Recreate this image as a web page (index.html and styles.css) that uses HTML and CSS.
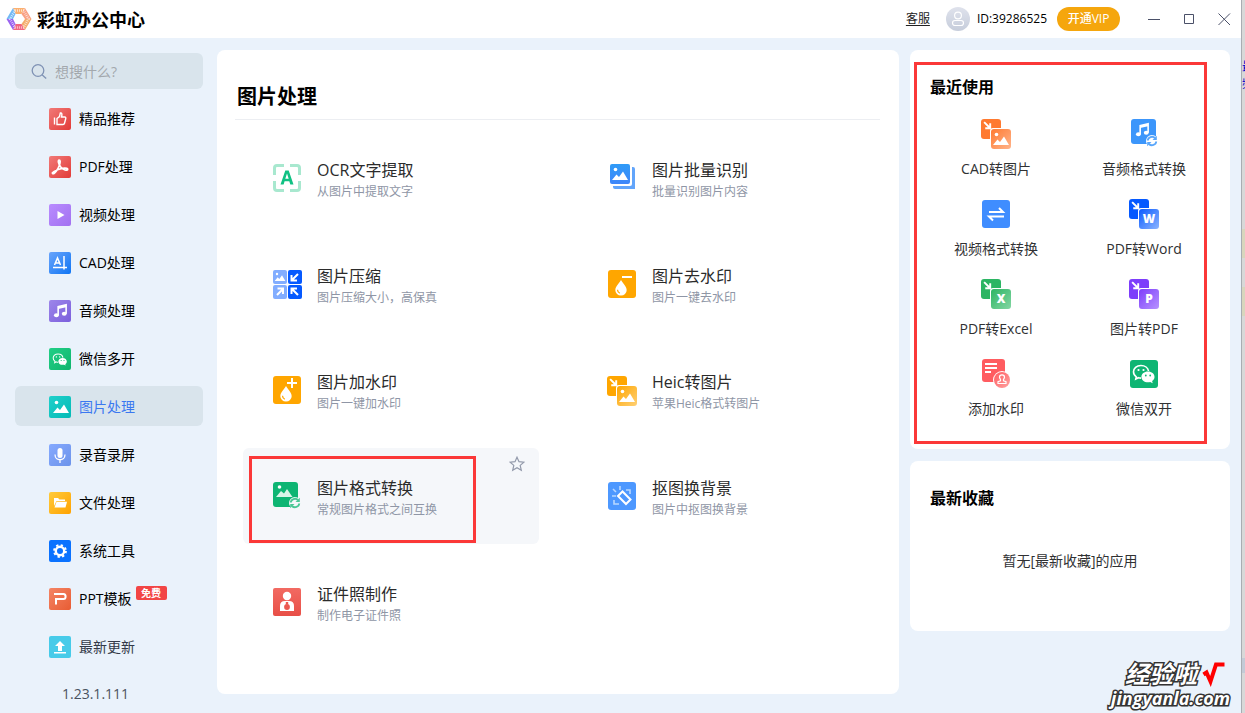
FILE: index.html
```html
<!DOCTYPE html>
<html lang="zh-CN">
<head>
<meta charset="utf-8">
<title>彩虹办公中心</title>
<link rel="stylesheet" href="styles.css">
</head>
<body>
<svg class="defs" aria-hidden="true">
  <defs>
    <linearGradient id="g-red" x1="0" y1="0" x2="1" y2="1"><stop offset="0" stop-color="#f17a78"/><stop offset="1" stop-color="#e23b38"/></linearGradient>
    <linearGradient id="g-violet" x1="0" y1="0" x2="1" y2="1"><stop offset="0" stop-color="#b98cff"/><stop offset="1" stop-color="#a271f0"/></linearGradient>
    <linearGradient id="g-blue" x1="0" y1="0" x2="1" y2="1"><stop offset="0" stop-color="#6aa5fb"/><stop offset="1" stop-color="#0f75f4"/></linearGradient>
    <linearGradient id="g-purple" x1="0" y1="0" x2="1" y2="1"><stop offset="0" stop-color="#9d86ea"/><stop offset="1" stop-color="#7b5fdc"/></linearGradient>
    <linearGradient id="g-green" x1="0" y1="0" x2="1" y2="1"><stop offset="0" stop-color="#22cf87"/><stop offset="1" stop-color="#0fb56c"/></linearGradient>
    <linearGradient id="g-teal" x1="0" y1="0" x2="1" y2="1"><stop offset="0" stop-color="#20d0cb"/><stop offset="1" stop-color="#04bab6"/></linearGradient>
    <linearGradient id="g-peri" x1="0" y1="0" x2="1" y2="1"><stop offset="0" stop-color="#86aaff"/><stop offset="1" stop-color="#6c93ea"/></linearGradient>
    <linearGradient id="g-amber" x1="0" y1="0" x2="1" y2="1"><stop offset="0" stop-color="#ffcb3c"/><stop offset="1" stop-color="#ffa200"/></linearGradient>
    <linearGradient id="g-coral" x1="0" y1="0" x2="1" y2="1"><stop offset="0" stop-color="#f48565"/><stop offset="1" stop-color="#e85c33"/></linearGradient>
    <linearGradient id="g-avatar" x1="0" y1="0" x2="0" y2="1"><stop offset="0" stop-color="#dfe2ec"/><stop offset="1" stop-color="#c6cddb"/></linearGradient>
    <linearGradient id="g-id" x1="0" y1="0" x2="0" y2="1"><stop offset="0" stop-color="#f26a62"/><stop offset="1" stop-color="#e84f47"/></linearGradient>
    <linearGradient id="g-pic" x1="0" y1="0" x2="0" y2="1"><stop offset="0" stop-color="#2f9bf7"/><stop offset="1" stop-color="#3f86fa"/></linearGradient>
    <linearGradient id="f-orange" x1="0" y1="0" x2="1" y2="1"><stop offset="0" stop-color="#ff7a30"/><stop offset="1" stop-color="#ffb48b"/></linearGradient>
    <linearGradient id="f-blue" x1="0" y1="0" x2="1" y2="1"><stop offset="0" stop-color="#0a5bff"/><stop offset="1" stop-color="#8db5ff"/></linearGradient>
    <linearGradient id="f-green" x1="0" y1="0" x2="1" y2="1"><stop offset="0" stop-color="#2cb563"/><stop offset="1" stop-color="#84d6a3"/></linearGradient>
    <linearGradient id="f-violet" x1="0" y1="0" x2="1" y2="1"><stop offset="0" stop-color="#7d3dfb"/><stop offset="1" stop-color="#b793ff"/></linearGradient>
    <linearGradient id="f-amber" x1="0" y1="0" x2="1" y2="1"><stop offset="0" stop-color="#ffa600"/><stop offset="1" stop-color="#ffd074"/></linearGradient>
    <linearGradient id="f-pink" x1="0" y1="0" x2="1" y2="1"><stop offset="0" stop-color="#ff5c60"/><stop offset="1" stop-color="#ffa3a1"/></linearGradient>

    <symbol id="arrow-in" viewBox="0 0 8 8"><path d="M1 1l5 5M6.400 2v4.400H2" fill="none" stroke="#fff" stroke-width="1.700"/></symbol>
    <symbol id="mountains" viewBox="0 0 18 14"><circle cx="4.500" cy="2.500" r="1.800" fill="#fff"/><path d="M1 13l4.500-5.500L8 10l4-5.500L17 13z" fill="#fff"/></symbol>
    <symbol id="note" viewBox="0 0 16 16"><path d="M5.500 13V4l8.500-2v9.500" fill="none" stroke="#fff" stroke-width="1.700"/><path d="M5.500 4L14 2v2.500L5.500 6.500z" fill="#fff"/><ellipse cx="3.600" cy="13" rx="2.600" ry="2.100" fill="#fff"/><ellipse cx="12" cy="11.500" rx="2.600" ry="2.100" fill="#fff"/></symbol>
    <symbol id="sync" viewBox="0 0 12 12"><path d="M1.800 5.500A4.200 4 0 0 1 9 3M10.200 6.500A4.200 4 0 0 1 3 9" fill="none" stroke="currentColor" stroke-width="1.900"/><path d="M10.800.8V5H6.500zM1.200 11.200V7h4.300z" fill="currentColor"/></symbol>
    <symbol id="drop" viewBox="0 0 14 18"><path d="M7 1C5 4.500 1 8 1 11.800a6 5.700 0 0 0 12 0C13 8 9 4.500 7 1z" fill="#fff"/><path d="M3.300 11.500c0 2 1 3 2.500 3.600" fill="none" stroke="#ffa600" stroke-width="1.300"/></symbol>
    <symbol id="chat" viewBox="0 0 24 20"><path d="M9 1.500C4.500 1.500 1.500 4.200 1.500 7.800c0 2 1 3.800 2.800 5L3.800 15l2.600-1.300c.8.200 1.700.4 2.600.4" fill="none" stroke="#fff" stroke-width="1.600"/><path d="M9 1.500c4 0 7 2.300 7.500 5.500" fill="none" stroke="#fff" stroke-width="1.600"/><circle cx="6.500" cy="6" r="1.100" fill="#fff"/><circle cx="11.500" cy="6" r="1.100" fill="#fff"/><path d="M16 7.500c-3.800 0-6.600 2.400-6.600 5.400s2.800 5.300 6.600 5.300c.8 0 1.500-.1 2.200-.3l2.500 1.300-.6-2.200c1.500-1 2.400-2.400 2.400-4.100 0-3-2.800-5.400-6.500-5.400z" fill="#fff"/><circle cx="13.800" cy="11.500" r=".9" fill="#12b974"/><circle cx="18.200" cy="11.500" r=".9" fill="#12b974"/></symbol>
  </defs>
</svg>

<div class="app">
  <header class="titlebar">
    <svg class="logo" viewBox="0 0 26 24">
      <path d="M7 1h12l-3.500 6h-6z" fill="#fbb070"/>
      <path d="M19 1l6.500 11h-6.500l-3.500-5z" fill="#f9a184"/>
      <path d="M25.500 12L19 23l-3.500-6 3.500-5z" fill="#f4ac6c"/>
      <path d="M19 23H7l2.500-6h6z" fill="#f2657f"/>
      <path d="M7 23L.5 12H7l2.500 5z" fill="#9a62ef"/>
      <path d="M.5 12L7 1l2.500 6L7 12z" fill="#72b9f5"/>
      <path d="M9 3.500h8.500l5 8.500-5 8.500H9L4 12z" fill="none" stroke="#fff" stroke-width="2.500" stroke-dasharray=".8 1.200" opacity=".75"/>
    </svg>
    <h1 class="brand">彩虹办公中心</h1>
    <div class="account">
      <a class="service" href="#">客服</a>
      <svg class="avatar" viewBox="0 0 24 24"><circle cx="12" cy="12" r="12" fill="url(#g-avatar)"/><g fill="none" stroke="#fff" stroke-width="1.200"><circle cx="12" cy="8.500" r="3.400"/><rect x="6.500" y="13.500" width="11" height="5" rx="2.500"/></g></svg>
      <span class="user-id">ID:39286525</span>
      <button class="vip" type="button">开通VIP</button>
    </div>
    <div class="window-buttons">
      <button type="button" aria-label="最小化"><svg viewBox="0 0 13 13"><path d="M0 6.500h12"/></svg></button>
      <button type="button" aria-label="最大化"><svg viewBox="0 0 13 13"><path d="M1.500 1.500h9v9h-9z"/></svg></button>
      <button type="button" aria-label="关闭"><svg viewBox="0 0 13 13"><path d="M.5.500l11.500 11.500M12 .5L.5 12"/></svg></button>
    </div>
  </header>

  <div class="workspace">
    <aside class="sidebar">
      <label class="search">
        <svg viewBox="0 0 16 16" fill="none" stroke="#7f92b4" stroke-width="1.300"><circle cx="7" cy="6.500" r="5.800"/><path d="M11 10.800l4.200 3.700"/></svg>
        <input type="text" placeholder="想搜什么?" aria-label="搜索">
      </label>
      <nav class="nav">
        <a href="#"><svg viewBox="0 0 22 22"><rect width="22" height="22" rx="2" fill="url(#g-red)"/><path d="M5.500 9.500v7M8 16.500v-6l2.500-2 .8-3.500c1.700-.3 2 1.300 1.200 4h3.200c1 0 1.300.8 1 1.700l-1.200 4.600c-.2.800-.8 1.200-1.500 1.200z" fill="none" stroke="#fff" stroke-width="1.400"/></svg>精品推荐</a>
        <a href="#"><svg viewBox="0 0 22 22"><rect width="22" height="22" rx="2" fill="url(#g-red)"/><path d="M3.500 17.500c1.500 1.500 5.500-4 7-8.500 1-3.200.8-5-.3-5-1.500 0-1 4 1.500 7 2.400 2.800 6.800 4.300 7 2.300.2-1.800-5.500-1.400-9.500.2-3.200 1.300-6.500 3-5.700 4z" fill="none" stroke="#fff" stroke-width="1.700"/></svg>PDF处理</a>
        <a href="#"><svg viewBox="0 0 22 22"><rect width="22" height="22" rx="2" fill="url(#g-violet)"/><path d="M8.500 7l7 4-7 4z" fill="#fff"/></svg>视频处理</a>
        <a href="#"><svg viewBox="0 0 22 22"><rect width="22" height="22" rx="2" fill="url(#g-blue)"/><path d="M5.500 13L8.500 6l3 7M6.500 11h4M4 15.500h14M15 4v13.500" fill="none" stroke="#fff" stroke-width="1.500"/></svg>CAD处理</a>
        <a href="#"><svg viewBox="0 0 22 22"><rect width="22" height="22" rx="2" fill="url(#g-purple)"/><use href="#note" x="4" y="3" width="15" height="15"/></svg>音频处理</a>
        <a href="#"><svg viewBox="0 0 22 22"><rect width="22" height="22" rx="2" fill="url(#g-green)"/><use href="#chat" x="3" y="5" width="16" height="13"/></svg>微信多开</a>
        <a class="active" href="#"><svg viewBox="0 0 22 22"><rect width="22" height="22" rx="2" fill="url(#g-teal)"/><use href="#mountains" x="3" y="4" width="18" height="14"/></svg>图片处理</a>
        <a href="#"><svg viewBox="0 0 22 22"><rect width="22" height="22" rx="2" fill="url(#g-peri)"/><rect x="8.500" y="4" width="5" height="10" rx="2.500" fill="#fff"/><path d="M6 10.500c0 7 10 7 10 0M11 15.500V19" fill="none" stroke="#fff" stroke-width="1.300"/></svg>录音录屏</a>
        <a href="#"><svg viewBox="0 0 22 22"><rect width="22" height="22" rx="2" fill="url(#g-amber)"/><path d="M5 14V6h4l1.500 1.500H16V9H7.500z" fill="#fff"/><path d="M7.500 9.700H18l-1.500 5.800h-11z" fill="#fff"/></svg>文件处理</a>
        <a href="#"><svg viewBox="0 0 22 22"><rect width="22" height="22" rx="2" fill="#0a72ff"/><circle cx="11" cy="11" r="4.200" fill="none" stroke="#fff" stroke-width="2.400"/><circle cx="11" cy="11" r="5.900" fill="none" stroke="#fff" stroke-width="2" stroke-dasharray="2.300 2.334"/></svg>系统工具</a>
        <a href="#"><svg viewBox="0 0 22 22"><rect width="22" height="22" rx="2" fill="url(#g-coral)"/><path d="M5 6h9.500c2.800 0 2.800 5 0 5H7v5.500" fill="none" stroke="#fff" stroke-width="2"/></svg>PPT模板<span class="free">免费</span></a>
        <a class="muted" href="#"><svg viewBox="0 0 22 22"><rect width="22" height="22" rx="2" fill="#47cbe9"/><path d="M11 5l5 5h-3v5H9v-5H6zM5 16h12v1.500H5z" fill="#fff"/></svg>最新更新</a>
      </nav>
      <p class="version">1.23.1.111</p>
    </aside>

    <main class="panel main">
      <h2 class="main-title">图片处理</h2>
      <div class="tools">
        <a class="tool" href="#"><svg viewBox="0 0 32 32"><path d="M3.500 13V6q0-2.500 2.500-2.500h7M19 3.500h7q2.500 0 2.500 2.500v7M28.500 19v7q0 2.500-2.500 2.500h-7M13 28.500H6q-2.500 0-2.500-2.500v-7" fill="none" stroke="#a8e8cf" stroke-width="3"/><path d="M9.500 22.500L14.300 8.500h3.400l4.800 14h-3.200l-1-3.200h-4.700l-1 3.200zM14.300 16.800h3.400L16 11.500z" fill="#10c183"/></svg><span class="tool-text"><strong>OCR文字提取</strong><small>从图片中提取文字</small></span></a>
        <a class="tool" href="#"><svg viewBox="0 0 32 32"><path d="M7 8h0V5h20q2 0 2 2v20H9q-2 0-2-2z" fill="#62a5fb"/><rect x="3" y="1" width="23" height="23" rx="2" fill="#fff"/><rect x="4" y="2" width="20" height="20" rx="2" fill="url(#g-pic)"/><use href="#mountains" x="5" y="5" width="18" height="14"/></svg><span class="tool-text"><strong>图片批量识别</strong><small>批量识别图片内容</small></span></a>
        <a class="tool" href="#"><svg viewBox="0 0 32 32"><rect x="2" y="2" width="14" height="14" rx="2" fill="#82adff"/><rect x="17" y="2" width="14" height="14" rx="2" fill="#0559ff"/><rect x="2" y="17" width="14" height="14" rx="2" fill="#82adff"/><rect x="17" y="17" width="14" height="14" rx="2" fill="#0559ff"/><use href="#mountains" x="3" y="4" width="12" height="10"/><g fill="none" stroke="#fff" stroke-width="2"><path d="M27 6l-6 6M20.500 7v5.500H26M6 27l6-6M6.500 20.500H12V26M27 27l-6-6M20.500 26v-5.500H26"/></g></svg><span class="tool-text"><strong>图片压缩</strong><small>图片压缩大小，高保真</small></span></a>
        <a class="tool" href="#"><svg viewBox="0 0 32 32"><rect x="2" y="2" width="28" height="28" rx="3" fill="#ffa600"/><path d="M16 9h10" stroke="#fff" stroke-width="2"/><use href="#drop" x="8" y="11" width="14" height="17"/></svg><span class="tool-text"><strong>图片去水印</strong><small>图片一键去水印</small></span></a>
        <a class="tool" href="#"><svg viewBox="0 0 32 32"><rect x="2" y="2" width="28" height="28" rx="3" fill="#ffa600"/><path d="M16 9h10M21 4v10" stroke="#fff" stroke-width="2"/><use href="#drop" x="8" y="11" width="14" height="17"/></svg><span class="tool-text"><strong>图片加水印</strong><small>图片一键加水印</small></span></a>
        <a class="tool" href="#"><svg viewBox="0 0 32 32"><rect x="1" y="2" width="20" height="20" rx="3" fill="#ffa600"/><use href="#arrow-in" x="3" y="4" width="9" height="9"/><rect x="10" y="11" width="22" height="22" rx="3" fill="#fff"/><rect x="11" y="12" width="20" height="20" rx="3" fill="url(#f-amber)"/><use href="#mountains" x="12" y="15" width="18" height="14"/></svg><span class="tool-text"><strong>Heic转图片</strong><small>苹果Heic格式转图片</small></span></a>
        <div class="tool hovered">
          <svg viewBox="0 0 32 32"><rect x="2" y="2" width="25" height="25" rx="3" fill="#0eb573"/><circle cx="8.500" cy="7" r="1.800" fill="#fff"/><path d="M5 17l5-6 3 2.500L16 9l5.500 8z" fill="#d9f5e8"/><circle cx="24" cy="23" r="6" fill="#f5f7fa"/><use href="#sync" x="18" y="17" width="12" height="12" color="#49c795"/></svg><span class="tool-text"><strong>图片格式转换</strong><small>常规图片格式之间互换</small></span>
          <button class="star" type="button" aria-label="收藏"><svg viewBox="0 0 16 16"><path d="M8 1.200l2 4.500 4.900.5-3.700 3.200 1.100 4.900L8 11.800l-4.300 2.500 1.100-4.900L1.100 6.200 6 5.700z" fill="none" stroke="#939aab" stroke-width="1.200"/></svg></button>
          <span class="mark mark-tool"></span>
        </div>
        <a class="tool" href="#"><svg viewBox="0 0 32 32"><rect x="2" y="2" width="28" height="28" rx="3" fill="#4d98ff"/><g fill="none" stroke="#b8d8ff" stroke-width="1.600"><path d="M14 6v4M7 9l3 3M6 16h4M20 10h4v4M8 20v4h5"/></g><path d="M12 16l4.500-4.500 8 8-4.500 4.500z" fill="none" stroke="#fff" stroke-width="2"/></svg><span class="tool-text"><strong>抠图换背景</strong><small>图片中抠图换背景</small></span></a>
        <a class="tool" href="#"><svg viewBox="0 0 32 32"><rect x="2" y="2" width="28" height="28" rx="2" fill="url(#g-id)"/><circle cx="16" cy="10" r="4.200" fill="#fff"/><path d="M9 25v-5q0-5 5-5h4q5 0 5 5v5z" fill="#fff"/><path d="M14.800 16h2.400v2.500h-2.400z" fill="#ec5850"/><circle cx="16" cy="21" r="2.900" fill="#ec5850"/></svg><span class="tool-text"><strong>证件照制作</strong><small>制作电子证件照</small></span></a>
      </div>
    </main>

    <aside class="right">
      <section class="panel recent">
        <h2 class="side-title">最近使用</h2>
        <div class="recent-grid">
          <a href="#"><svg viewBox="0 0 32 32"><rect x="1" y="1" width="20" height="20" rx="3" fill="#ff7a30"/><use href="#arrow-in" x="3" y="3" width="9" height="9"/><rect x="10" y="10" width="22" height="22" rx="3" fill="#fff"/><rect x="11" y="11" width="20" height="20" rx="3" fill="url(#f-orange)"/><use href="#mountains" x="12" y="14" width="18" height="14"/></svg>CAD转图片</a>
          <a href="#"><svg viewBox="0 0 32 32"><rect x="3" y="1" width="25" height="25" rx="3" fill="#3c96fb"/><use href="#note" x="7" y="4" width="15" height="15"/><circle cx="24" cy="23" r="6" fill="#fff"/><use href="#sync" x="18" y="17" width="12" height="12" color="#5aa7fb"/></svg>音频格式转换</a>
          <a href="#"><svg viewBox="0 0 32 32"><rect x="2" y="2" width="28" height="28" rx="3" fill="#3f8dff"/><path d="M9 14h14l-4-4M24 18.500H9l4 4" fill="none" stroke="#fff" stroke-width="2"/></svg>视频格式转换</a>
          <a href="#"><svg viewBox="0 0 32 32"><rect x="1" y="1" width="20" height="20" rx="3" fill="#0559ff"/><use href="#arrow-in" x="3" y="3" width="9" height="9"/><rect x="10" y="10" width="22" height="22" rx="3" fill="#fff"/><rect x="11" y="11" width="20" height="20" rx="3" fill="url(#f-blue)"/><text class="badge-letter" x="21" y="25">W</text></svg>PDF转Word</a>
          <a href="#"><svg viewBox="0 0 32 32"><rect x="1" y="1" width="20" height="20" rx="3" fill="#2cb563"/><use href="#arrow-in" x="3" y="3" width="9" height="9"/><rect x="10" y="10" width="22" height="22" rx="3" fill="#fff"/><rect x="11" y="11" width="20" height="20" rx="3" fill="url(#f-green)"/><text class="badge-letter" x="21" y="25">X</text></svg>PDF转Excel</a>
          <a href="#"><svg viewBox="0 0 32 32"><rect x="1" y="1" width="20" height="20" rx="3" fill="#7d3dfb"/><use href="#arrow-in" x="3" y="3" width="9" height="9"/><rect x="10" y="10" width="22" height="22" rx="3" fill="#fff"/><rect x="11" y="11" width="20" height="20" rx="3" fill="url(#f-violet)"/><text class="badge-letter" x="21" y="25">P</text></svg>图片转PDF</a>
          <a href="#"><svg viewBox="0 0 32 32"><rect x="2" y="1" width="23" height="23" rx="3" fill="#ff5c60"/><path d="M5 6h12M5 10h12M5 14h6" stroke="#fff" stroke-width="2"/><circle cx="22" cy="22" r="9" fill="#fff"/><circle cx="22" cy="22" r="8" fill="url(#f-pink)"/><path d="M18 25.500h8v-1.800l-2.500-1c-.5-1.700 1-2 1-3.500 0-3-5-3-5 0 0 1.500 1.500 1.800 1 3.500l-2.500 1z" fill="none" stroke="#fff" stroke-width="1.200"/></svg>添加水印</a>
          <a href="#"><svg viewBox="0 0 32 32"><rect x="2" y="2" width="28" height="28" rx="3" fill="#0eb573"/><use href="#chat" x="4" y="6" width="24" height="20"/></svg>微信双开</a>
        </div>
        <span class="mark mark-recent"></span>
      </section>
      <section class="panel favorites">
        <h2 class="side-title">最新收藏</h2>
        <p class="empty">暂无[最新收藏]的应用</p>
      </section>
    </aside>
  </div>

  <div class="watermark">
    <div class="wm-top"><span>经验啦</span><svg viewBox="0 0 24 26"><path d="M1.500 12.500l3-2 4 9L14 2.500h8.500" fill="none" stroke="#f00" stroke-width="4"/></svg></div>
    <div class="wm-url">jingyanla.com</div>
  </div>
</div>
<div class="backdrop"><span class="behind">最<br>频</span></div>
</body>
</html>
```
FILE: styles.css
```css
* { box-sizing: border-box; }

body {
  margin: 0;
  min-height: 100vh;
  display: flex;
  background: #eaf2fb;
  color: #000;
  font-family: "Open Sans", "Noto Sans CJK SC", sans-serif;
  font-size: 14px;
  line-height: 20px;
}

h1, h2, p { margin: 0; }
a { color: inherit; text-decoration: none; }
button { border: 0; padding: 0; background: none; font: inherit; cursor: pointer; }
svg { display: block; flex: none; }
.defs { position: absolute; width: 0; height: 0; }

.app {
  position: relative;
  flex: 1;
  min-width: 0;
  display: flex;
  flex-direction: column;
}

/* Title bar */
.titlebar {
  display: flex;
  align-items: center;
  height: 38px;
  padding: 0 10px 0 6px;
  background: #fff;
}
.logo { width: 26px; height: 24px; }
.brand { margin-left: 5px; padding-top: 2px; font-size: 18px; line-height: 24px; font-weight: 700; }
.account {
  display: flex;
  align-items: center;
  margin-left: auto;
  font-size: 12px;
}
.service { color: #222; text-decoration: underline; text-underline-offset: 2px; }
.avatar { width: 24px; height: 24px; margin: 0 7px 0 16px; }
.vip {
  width: 63px;
  height: 24px;
  margin-left: 10px;
  border-radius: 12px;
  background: #f5a60d;
  color: #fff;
  font-weight: 500;
  line-height: 24px;
}
.window-buttons { display: flex; gap: 22px; margin-left: 28px; }
.window-buttons svg { width: 13px; height: 13px; fill: none; stroke: #4a5068; stroke-width: 1; }

.workspace {
  flex: 1;
  display: grid;
  grid-template-columns: 217px minmax(0, 1fr) 320px;
  padding-right: 11px;
}
.panel { background: #fff; border-radius: 8px; }

/* Sidebar */
.sidebar { padding: 15px 14px 10px 15px; }
.search {
  display: flex;
  align-items: center;
  gap: 8px;
  height: 36px;
  padding: 1px 16px 0;
  border-radius: 6px;
  background: #d9e4ec;
}
.search svg { width: 16px; height: 16px; }
.search input {
  flex: 1;
  min-width: 0;
  border: 0;
  padding: 0;
  outline: 0;
  background: none;
  font: inherit;
}
.search input::placeholder { color: #a3a8ad; }
.nav { display: flex; flex-direction: column; gap: 8px; margin-top: 9px; }
.nav a {
  display: flex;
  align-items: center;
  gap: 8px;
  height: 40px;
  padding: 2px 0 0 34px;
  border-radius: 6px;
}
.nav svg { width: 22px; height: 22px; }
.nav .active { background: #d9e4ec; color: #3b78f0; }
.nav .muted { color: #333a48; }
.free {
  align-self: flex-start;
  margin: 6px 0 0 -4px;
  width: 31px;
  border-radius: 2px;
  background: #f24545;
  color: #fff;
  font-size: 10px;
  font-weight: 700;
  line-height: 14px;
  text-align: center;
}
.version { margin-top: 18px; padding-left: 47px; color: #4a5260; }

/* Main panel */
.main { margin: 12px 11px 20px 0; padding: 35px 19px 34px 18px; }
.main-title {
  padding: 0 2px 10px;
  border-bottom: 1px solid #eceef2;
  font-size: 20px;
  line-height: 24px;
}
.tools {
  display: grid;
  grid-template-columns: 1fr 1fr;
  gap: 10px 39px;
  padding: 10px 6px 0 8px;
}
.tool {
  position: relative;
  display: flex;
  align-items: center;
  gap: 14px;
  height: 96px;
  padding-left: 28px;
  border-radius: 6px;
}
.tool > svg { width: 32px; height: 32px; }
.tool-text { display: flex; flex-direction: column; padding-top: 4px; }
.tool strong { color: #2b2b2b; font-size: 16px; font-weight: 400; line-height: 24px; }
.tool small { color: #8f96a6; font-size: 12px; line-height: 20px; }
.hovered { background: #f5f7fa; }
.star { position: absolute; top: 8px; right: 14px; }
.star svg { width: 16px; height: 16px; }

/* Red highlight frames */
.mark { position: absolute; border: 3px solid #fb3838; pointer-events: none; }
.mark-tool { top: 8px; right: 63px; bottom: 1px; left: 6px; }
.mark-recent { top: 12px; right: 23px; bottom: 5px; left: 4px; }

/* Right column */
.right { display: flex; flex-direction: column; gap: 12px; padding-top: 12px; }
.side-title { padding-left: 8px; font-size: 16px; line-height: 24px; }
.recent { position: relative; padding: 25px 12px 11px; }
.recent-grid {
  display: grid;
  grid-template-columns: 1fr 1fr;
  margin-top: 19px;
}
.recent-grid a {
  display: flex;
  flex-direction: column;
  align-items: center;
  gap: 9px;
  height: 80px;
  color: #303133;
}
.recent-grid svg { width: 32px; height: 32px; }
.badge-letter {
  fill: #fff;
  font-family: "Open Sans", sans-serif;
  font-size: 12px;
  font-weight: 800;
  text-anchor: middle;
}
.favorites { padding: 25px 12px 60px; }
.empty { margin-top: 41px; color: #303133; text-align: center; }

/* Watermark over the window's corner */
.watermark {
  position: absolute;
  right: 11px;
  bottom: 6px;
  color: #fff;
  font-style: italic;
  font-weight: 700;
  -webkit-text-stroke: 3px #333;
  paint-order: stroke fill;
}
.wm-top {
  display: flex;
  gap: 5px;
  padding-left: 14px;
  font-size: 24px;
  line-height: 24px;
}
.wm-top svg { width: 24px; height: 26px; }
.wm-url { font-size: 18px; line-height: 20px; text-align: right; }

/* Window behind the application */
.backdrop {
  flex: none;
  width: 4px;
  overflow: hidden;
  border-left: 1px solid #a9adb2;
  background: linear-gradient(#d8d8d8 229px, #d8d6bd 229px 258px, #d8d8d8 258px 287px, #d8d6bd 287px 316px, #d8d8d8 316px 658px, #c3cad6 658px 673px, #d8d8d8 673px);
  color: #0000c8;
}
.behind { display: block; padding-top: 58px; font-size: 12px; line-height: 17px; }
```
